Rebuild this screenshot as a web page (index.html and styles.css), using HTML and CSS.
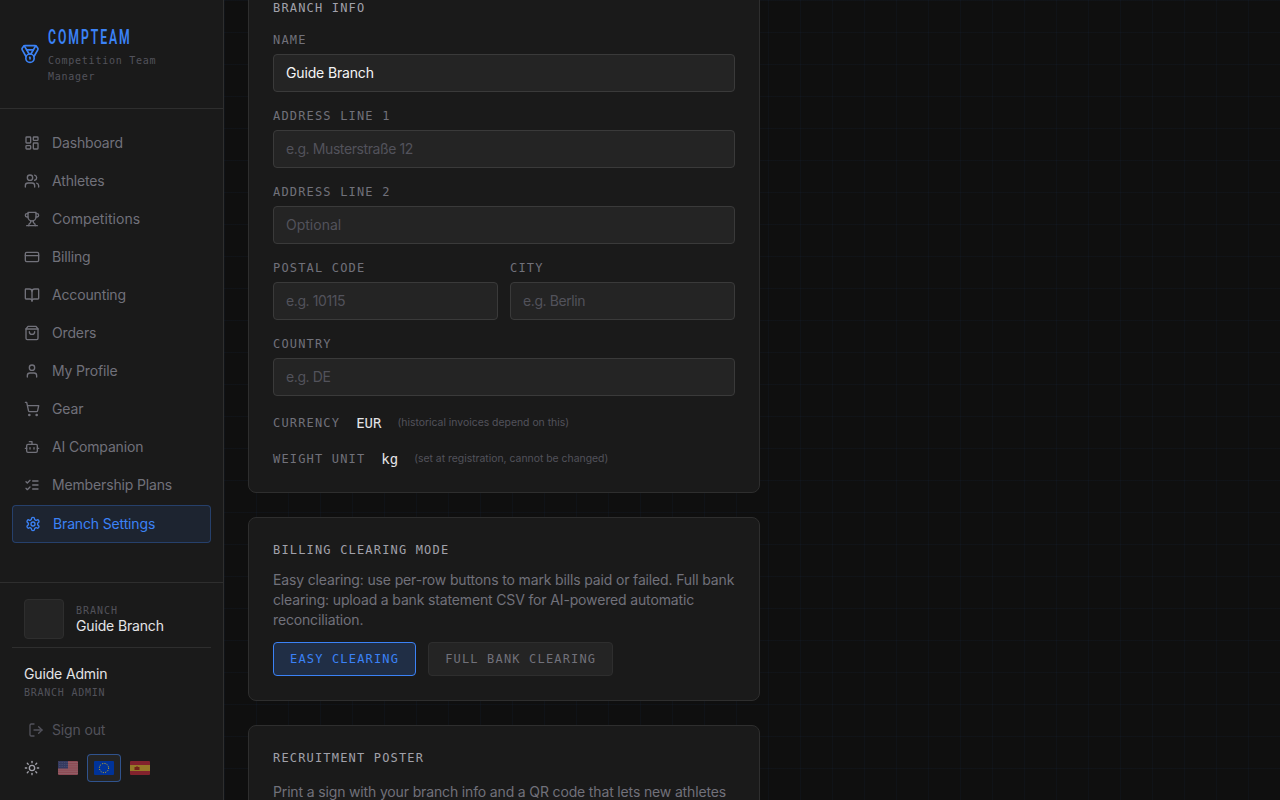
FILE: index.html
```html
<!DOCTYPE html>
<html lang="en">
<head>
    <meta charset="UTF-8">
    <meta name="viewport" content="width=device-width, initial-scale=1.0">
    <title>CompTeam - Branch Settings</title>
    <link rel="stylesheet" href="styles.css">
</head>
<body>
    <aside class="sidebar">
        <div class="brand">
            <svg class="brand-icon" viewBox="0 0 24 24"><path d="M7.21 15 2.66 7.14a2 2 0 0 1 .13-2.2L4.4 2.8A2 2 0 0 1 6 2h12a2 2 0 0 1 1.6.8l1.6 2.14a2 2 0 0 1 .14 2.2L16.79 15"/><path d="M11 12 5.12 2.2"/><path d="m13 12 5.88-9.8"/><path d="M8 7h8"/><circle cx="12" cy="17" r="5"/><path d="M12 18v-2h-.5"/></svg>
            <div>
                <div class="brand-name"><span>COMPTEAM</span></div>
                <div class="brand-sub">Competition Team<br>Manager</div>
            </div>
        </div>

        <nav class="nav">
            <a class="nav-item"><svg viewBox="0 0 24 24"><rect width="7" height="9" x="3" y="3" rx="1"/><rect width="7" height="5" x="14" y="3" rx="1"/><rect width="7" height="9" x="14" y="12" rx="1"/><rect width="7" height="5" x="3" y="16" rx="1"/></svg><span>Dashboard</span></a>
            <a class="nav-item"><svg viewBox="0 0 24 24"><path d="M16 21v-2a4 4 0 0 0-4-4H6a4 4 0 0 0-4 4v2"/><circle cx="9" cy="7" r="4"/><path d="M22 21v-2a4 4 0 0 0-3-3.87"/><path d="M16 3.13a4 4 0 0 1 0 7.75"/></svg><span>Athletes</span></a>
            <a class="nav-item wide"><svg viewBox="0 0 24 24"><path d="M6 9H4.5a2.5 2.5 0 0 1 0-5H6"/><path d="M18 9h1.5a2.5 2.5 0 0 0 0-5H18"/><path d="M4 22h16"/><path d="M10 14.66V17c0 .55-.47.98-.97 1.21C7.85 18.75 7 20.24 7 22"/><path d="M14 14.66V17c0 .55.47.98.97 1.21C16.15 18.75 17 20.24 17 22"/><path d="M18 2H6v7a6 6 0 0 0 12 0V2Z"/></svg><span>Competitions</span></a>
            <a class="nav-item"><svg viewBox="0 0 24 24"><rect width="20" height="14" x="2" y="5" rx="2"/><path d="M2 10h20"/></svg><span>Billing</span></a>
            <a class="nav-item"><svg viewBox="0 0 24 24"><path d="M12 7v14"/><path d="M3 18a1 1 0 0 1-1-1V4a1 1 0 0 1 1-1h5a4 4 0 0 1 4 4 4 4 0 0 1 4-4h5a1 1 0 0 1 1 1v13a1 1 0 0 1-1 1h-6a3 3 0 0 0-3 3 3 3 0 0 0-3-3z"/></svg><span>Accounting</span></a>
            <a class="nav-item"><svg viewBox="0 0 24 24"><path d="M6 2 3 6v14a2 2 0 0 0 2 2h14a2 2 0 0 0 2-2V6l-3-4Z"/><path d="M3 6h18"/><path d="M16 10a4 4 0 0 1-8 0"/></svg><span>Orders</span></a>
            <a class="nav-item"><svg viewBox="0 0 24 24"><path d="M19 21v-2a4 4 0 0 0-4-4H9a4 4 0 0 0-4 4v2"/><circle cx="12" cy="7" r="4"/></svg><span>My Profile</span></a>
            <a class="nav-item"><svg viewBox="0 0 24 24"><circle cx="8" cy="21" r="1"/><circle cx="19" cy="21" r="1"/><path d="M2.05 2.05h2l2.66 12.42a2 2 0 0 0 2 1.58h9.78a2 2 0 0 0 1.95-1.57l1.65-7.43H5.12"/></svg><span>Gear</span></a>
            <a class="nav-item"><svg viewBox="0 0 24 24"><path d="M12 8V4H8"/><rect width="16" height="12" x="4" y="8" rx="2"/><path d="M2 14h2"/><path d="M20 14h2"/><path d="M15 13v2"/><path d="M9 13v2"/></svg><span>AI Companion</span></a>
            <a class="nav-item"><svg viewBox="0 0 24 24"><path d="m3 17 2 2 4-4"/><path d="m3 7 2 2 4-4"/><path d="M13 6h8"/><path d="M13 12h8"/><path d="M13 18h8"/></svg><span>Membership Plans</span></a>
            <a class="nav-item active"><svg viewBox="0 0 24 24"><path d="M12.22 2h-.44a2 2 0 0 0-2 2v.18a2 2 0 0 1-1 1.73l-.43.25a2 2 0 0 1-2 0l-.15-.08a2 2 0 0 0-2.73.73l-.22.38a2 2 0 0 0 .73 2.73l.15.1a2 2 0 0 1 1 1.72v.51a2 2 0 0 1-1 1.74l-.15.09a2 2 0 0 0-.73 2.73l.22.38a2 2 0 0 0 2.73.73l.15-.08a2 2 0 0 1 2 0l.43.25a2 2 0 0 1 1 1.73V20a2 2 0 0 0 2 2h.44a2 2 0 0 0 2-2v-.18a2 2 0 0 1 1-1.73l.43-.25a2 2 0 0 1 2 0l.15.08a2 2 0 0 0 2.73-.73l.22-.39a2 2 0 0 0-.73-2.73l-.15-.08a2 2 0 0 1-1-1.74v-.5a2 2 0 0 1 1-1.74l.15-.09a2 2 0 0 0 .73-2.73l-.22-.38a2 2 0 0 0-2.73-.73l-.15.08a2 2 0 0 1-2 0l-.43-.25a2 2 0 0 1-1-1.73V4a2 2 0 0 0-2-2z"/><circle cx="12" cy="12" r="3"/></svg><span>Branch Settings</span></a>
        </nav>

        <div class="side-footer">
            <div class="branch">
                <div class="branch-logo"></div>
                <div>
                    <div class="tiny">BRANCH</div>
                    <div class="branch-name">Guide Branch</div>
                </div>
            </div>
            <div class="user">
                <div class="user-name">Guide Admin</div>
                <div class="tiny">BRANCH ADMIN</div>
            </div>
            <a class="sign-out"><svg viewBox="0 0 24 24"><path d="M9 21H5a2 2 0 0 1-2-2V5a2 2 0 0 1 2-2h4"/><path d="m16 17 5-5-5-5"/><path d="M21 12H9"/></svg><span>Sign out</span></a>
            <div class="tools">
                <svg class="theme" viewBox="0 0 24 24"><circle cx="12" cy="12" r="4"/><path d="M12 2v2"/><path d="M12 20v2"/><path d="m4.93 4.93 1.41 1.41"/><path d="m17.66 17.66 1.41 1.41"/><path d="M2 12h2"/><path d="M20 12h2"/><path d="m6.34 17.66-1.41 1.41"/><path d="m19.07 4.93-1.41 1.41"/></svg>
                <div class="flag">
                    <svg viewBox="0 0 20 14">
                        <rect width="20" height="14" fill="#d8697a"/>
                        <path d="M0 1.6h20M0 3.8h20M0 5.9h20M0 8.1h20M0 10.2h20M0 12.4h20" stroke="#e8a0aa" stroke-width=".7"/>
                        <rect width="10" height="7.5" fill="#46508f"/>
                        <path d="M1 1.5h9M1 3.5h9M1 5.5h9" stroke="#8d94c4" stroke-width=".6" stroke-dasharray=".7 1"/>
                    </svg>
                </div>
                <div class="flag selected">
                    <svg viewBox="0 0 20 14">
                        <rect width="20" height="14" fill="#039"/>
                        <circle cx="10" cy="7" r="4.6" fill="none" stroke="#fc0" stroke-width=".9" stroke-dasharray="1 1.41"/>
                    </svg>
                </div>
                <div class="flag">
                    <svg viewBox="0 0 20 14">
                        <rect width="20" height="14" fill="#c8283a"/>
                        <rect width="20" height="6" y="4" fill="#e8b830"/>
                        <path d="M4.5 6h1.5l1-1 1 1h1.5v3h-5z" fill="#ad2a19"/>
                    </svg>
                </div>
            </div>
        </div>
    </aside>

    <main class="content">
        <!-- Branch details -->
        <section class="card branch-info">
            <h2>BRANCH INFO</h2>
            <div class="field">
                <label for="name">NAME</label>
                <input type="text" id="name" value="Guide Branch">
            </div>
            <div class="field">
                <label for="address1">ADDRESS LINE 1</label>
                <input type="text" id="address1" placeholder="e.g. Musterstraße 12">
            </div>
            <div class="field">
                <label for="address2">ADDRESS LINE 2</label>
                <input type="text" id="address2" class="plain" placeholder="Optional">
            </div>
            <div class="field-row">
                <div class="field">
                    <label for="postal">POSTAL CODE</label>
                    <input type="text" id="postal" placeholder="e.g. 10115">
                </div>
                <div class="field">
                    <label for="city">CITY</label>
                    <input type="text" id="city" placeholder="e.g. Berlin">
                </div>
            </div>
            <div class="field">
                <label for="country">COUNTRY</label>
                <input type="text" id="country" placeholder="e.g. DE">
            </div>
            <div class="fixed-row">
                <span class="fixed-label">CURRENCY</span>
                <span class="fixed-value">EUR</span>
                <span class="fixed-note">(historical invoices depend on this)</span>
            </div>
            <div class="fixed-row">
                <span class="fixed-label">WEIGHT UNIT</span>
                <span class="fixed-value">kg</span>
                <span class="fixed-note">(set at registration, cannot be changed)</span>
            </div>
        </section>

        <!-- Clearing mode -->
        <section class="card clearing">
            <h2>BILLING CLEARING MODE</h2>
            <p>Easy clearing: use per-row buttons to mark bills paid or failed. Full bank<br>clearing: upload a bank statement CSV for AI-powered automatic<br>reconciliation.</p>
            <div class="modes">
                <button class="mode on">EASY CLEARING</button>
                <button class="mode">FULL BANK CLEARING</button>
            </div>
        </section>

        <!-- Poster -->
        <section class="card">
            <h2>RECRUITMENT POSTER</h2>
            <p>Print a sign with your branch info and a QR code that lets new athletes</p>
        </section>
    </main>
</body>
</html>
```
FILE: styles.css
```css
* {
    box-sizing: border-box;
}

body {
    margin: 0;
    height: 100vh;
    display: flex;
    overflow: hidden;
    font-family: Inter, "Noto Sans", sans-serif;
    font-size: 14px;
    line-height: 20px;
    letter-spacing: -0.15px;
    color: #f4f4f5;
    background-color: #0f0f0f;
    background-image:
        linear-gradient(rgba(59, 130, 246, 0.04) 1px, transparent 1px),
        linear-gradient(90deg, rgba(59, 130, 246, 0.04) 1px, transparent 1px);
    background-size: 32px 32px;
}

svg {
    display: block;
    flex-shrink: 0;
}

/* Sidebar */
.sidebar {
    width: 224px;
    flex-shrink: 0;
    display: flex;
    flex-direction: column;
    background: #1a1a1a;
    border-right: 1px solid #2e2e2e;
}

.brand {
    display: flex;
    align-items: center;
    gap: 8px;
    padding: 24px 20px;
    border-bottom: 1px solid #2e2e2e;
}

.brand-icon,
.nav-item svg,
.sign-out svg,
.theme {
    width: 16px;
    height: 16px;
    fill: none;
    stroke: currentColor;
    stroke-width: 2;
    stroke-linecap: round;
    stroke-linejoin: round;
}

.brand-icon {
    width: 20px;
    height: 20px;
    color: #3b82f6;
}

.brand-name {
    width: 84px;
    height: 28px;
    font-family: Roboto, sans-serif;
    font-size: 20px;
    font-weight: 600;
    line-height: 27px;
    color: #3b82f6;
}

.brand-name span {
    display: inline-block;
    letter-spacing: 3.2px;
    transform: scaleX(0.61);
    transform-origin: left;
}

.brand-sub,
.tiny {
    font-family: "DejaVu Sans Mono", monospace;
    font-size: 10px;
    line-height: 16px;
    letter-spacing: 0.75px;
    color: #52525b;
}

.brand-sub {
    padding-top: 1px;
    margin-bottom: -1px;
}

.nav {
    flex: 1;
    display: flex;
    flex-direction: column;
    gap: 2px;
    padding: 16px 12px;
}

.nav-item {
    display: flex;
    align-items: center;
    gap: 12px;
    padding: 8px 12px;
    border-radius: 4px;
    color: #71717a;
}

.nav-item.wide {
    letter-spacing: 0.05px;
}

.nav-item.active {
    color: #3b82f6;
    background: rgba(59, 130, 246, 0.1);
    border: 1px solid rgba(59, 130, 246, 0.3);
}

.side-footer {
    height: 218px;
    padding: 16px 12px;
    border-top: 1px solid #2e2e2e;
}

.branch {
    display: flex;
    gap: 12px;
    padding: 0 12px 8px;
    border-bottom: 1px solid #2e2e2e;
}

.branch-logo {
    width: 40px;
    height: 40px;
    border-radius: 4px;
    background: #242424;
    border: 1px solid #2e2e2e;
}

.branch .tiny {
    margin-top: 4px;
    line-height: 15px;
    letter-spacing: 1px;
}

.branch-name {
    line-height: 15px;
}

.branch-name,
.user-name {
    color: #e4e4e7;
}

.user {
    padding: 16px 12px 0;
}

.user .tiny {
    padding-top: 1px;
    margin-bottom: -1px;
}

.sign-out {
    display: flex;
    align-items: center;
    gap: 8px;
    margin: 20px 0 14px;
    padding-left: 16px;
    color: #52525b;
}

.tools {
    display: flex;
    align-items: center;
    padding-left: 12px;
}

.theme {
    margin-right: 11px;
    color: #a1a1aa;
}

.flag {
    width: 34px;
    height: 28px;
    padding: 6px;
    margin-right: 2px;
    border: 1px solid transparent;
    border-radius: 4px;
}

.flag svg {
    width: 20px;
    height: 14px;
    border-radius: 1px;
    opacity: 0.6;
}

.flag.selected {
    background: #242424;
    border-color: rgba(59, 130, 246, 0.5);
}

.flag.selected svg {
    opacity: 1;
}

/* Content */
.content {
    width: 560px;
    height: 100vh;
    padding: 0 24px;
    overflow: hidden;
}

.card {
    margin-bottom: 24px;
    padding: 24px;
    background: #1a1a1a;
    border: 1px solid #2e2e2e;
    border-radius: 8px;
}

.branch-info {
    display: flex;
    flex-direction: column;
    gap: 16px;
    margin-top: -25px;
}

h2,
label,
.fixed-label,
.mode {
    margin: 0;
    font-family: "DejaVu Sans Mono", monospace;
    font-size: 12px;
    font-weight: 400;
    line-height: 16px;
    letter-spacing: 1.17px;
    color: #71717a;
}

h2 {
    color: #a1a1aa;
}

.field {
    flex: 1;
    min-width: 0;
}

.field-row {
    display: flex;
    gap: 12px;
}

label {
    display: block;
    margin-bottom: 6px;
}

input {
    display: block;
    width: 100%;
    height: 38px;
    padding: 7px 12px 9px;
    font: inherit;
    letter-spacing: inherit;
    color: #f4f4f5;
    background: #242424;
    border: 1px solid #3a3a3a;
    border-radius: 4px;
}

input::placeholder {
    color: #52525b;
    letter-spacing: -0.4px;
}

input.plain::placeholder {
    letter-spacing: 0;
}

.fixed-row {
    display: flex;
    align-items: center;
    gap: 16px;
    height: 20px;
    padding-top: 1px;
}

.fixed-value {
    font-family: "DejaVu Sans Mono", monospace;
    letter-spacing: 0;
    color: #e4e4e7;
}

.fixed-note {
    padding-top: 1px;
    font-size: 10.4px;
    letter-spacing: 0;
    color: #52525b;
}

.card p {
    margin: 16px 0 0;
    white-space: nowrap;
    color: #71717a;
}

.clearing p {
    margin: 12px 0;
}

.modes {
    display: flex;
    gap: 12px;
}

.mode {
    padding: 8px 16px;
    background: #242424;
    border: 1px solid #2e2e2e;
    border-radius: 4px;
}

.mode.on {
    color: #3b82f6;
    background: rgba(59, 130, 246, 0.2);
    border-color: #3b82f6;
}
```
